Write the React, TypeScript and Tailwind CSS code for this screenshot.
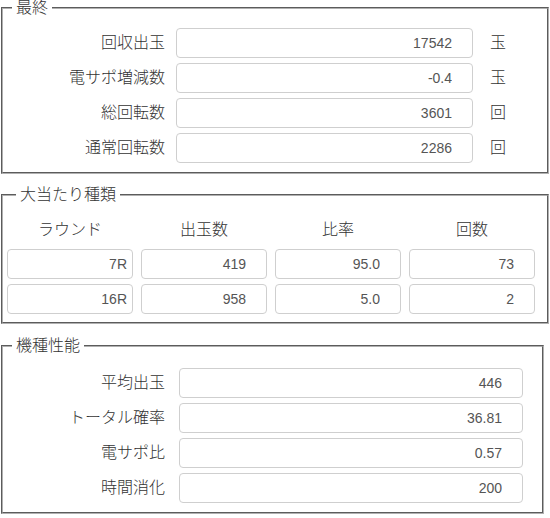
import type { ReactNode } from 'react'

const font = { fontFamily: '"Liberation Sans", "Noto Sans CJK JP", sans-serif' }

interface Row {
  label: string
  value: string
  unit?: string
}

const finalRows: Row[] = [
  { label: '回収出玉', value: '17542', unit: '玉' },
  { label: '電サポ増減数', value: '-0.4', unit: '玉' },
  { label: '総回転数', value: '3601', unit: '回' },
  { label: '通常回転数', value: '2286', unit: '回' },
]

const bonusRows = [
  ['7R', '419', '95.0', '73'],
  ['16R', '958', '5.0', '2'],
]

const specRows: Row[] = [
  { label: '平均出玉', value: '446' },
  { label: 'トータル確率', value: '36.81' },
  { label: '電サポ比', value: '0.57' },
  { label: '時間消化', value: '200' },
]

function Group({ title, className, children }: { title: string; className: string; children: ReactNode }) {
  return (
    <fieldset className={`ml-px border-2 [border-style:groove] border-[#b0b0b0] ${className}`}>
      <legend className="ml-[9px] px-[4px] text-[16px] font-light leading-[16px] text-[#333]">{title}</legend>
      {children}
    </fieldset>
  )
}

function Field({ value, className }: { value: string; className: string }) {
  return (
    <input
      readOnly
      value={value}
      className={`h-[30px] rounded-[4px] border border-[#cfcfcf] bg-white text-right text-[14px] text-[#555] outline-none ${className}`}
      style={font}
    />
  )
}

export default function App() {
  return (
    <div className="w-[550px] h-[518px] bg-white" style={font}>
      {/* 最終 */}
      <Group title="最終" className="w-[548px] pt-[12px] pb-[9px]">
        <div className="flex flex-col gap-[5px]">
          {finalRows.map((r) => (
            <div key={r.label} className="flex items-center">
              <span className="w-[162px] text-right text-[16px] font-light text-[#333]">{r.label}</span>
              <Field value={r.value} className="ml-[11px] w-[297px] pr-[20px]" />
              <span className="ml-[17px] text-[16px] font-light text-[#333]">{r.unit}</span>
            </div>
          ))}
        </div>
      </Group>

      {/* 大当たり種類 */}
      <Group title="大当たり種類" className="mt-[13px] w-[548px] pl-[4px] pt-[15px] pb-[8px]">
        <div className="grid grid-cols-[126px_126px_126px_126px] gap-x-[8px]">
          {['ラウンド', '出玉数', '比率', '回数'].map((h) => (
            <div key={h} className="h-[24px] text-center text-[16px] font-light leading-[24px] text-[#333]">
              {h}
            </div>
          ))}
        </div>
        <div className="mt-[7px] flex flex-col gap-[5px]">
          {bonusRows.map((row) => (
            <div key={row[0]} className="grid grid-cols-[126px_126px_126px_126px] gap-x-[8px]">
              {row.map((v, i) => (
                <Field key={i} value={v} className={`w-full ${i === 0 ? 'pr-[5px]' : 'pr-[20px]'}`} />
              ))}
            </div>
          ))}
        </div>
      </Group>

      {/* 機種性能 */}
      <Group title="機種性能" className="mt-[14px] w-[543px] pt-[14px] pb-[9px]">
        <div className="flex flex-col gap-[5px]">
          {specRows.map((r) => (
            <div key={r.label} className="flex items-center">
              <span className="w-[162px] text-right text-[16px] font-light text-[#333]">{r.label}</span>
              <Field value={r.value} className="ml-[14px] w-[344px] pr-[20px]" />
            </div>
          ))}
        </div>
      </Group>
    </div>
  )
}
